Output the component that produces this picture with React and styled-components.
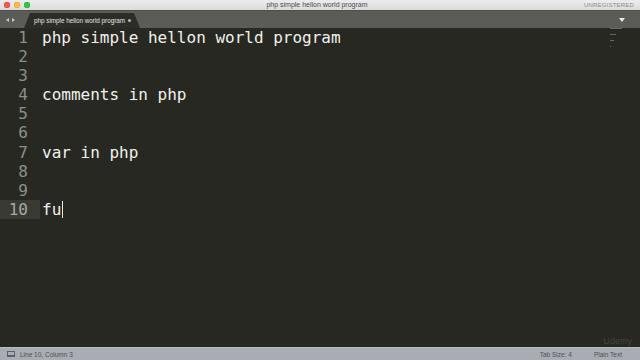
import React from "react";
import styled, { createGlobalStyle } from "styled-components";

const Global = createGlobalStyle`
	html, body {
		margin: 0;
		padding: 0;
		width: 640px;
		height: 360px;
		overflow: hidden;
		background: #272822;
	}
	* { box-sizing: border-box; }
`;

const lines = [
	"php simple hellon world program",
	"",
	"",
	"comments in php",
	"",
	"",
	"var in php",
	"",
	"",
	"fu",
];

const App = () => {
	return (
		<>
			<Global />
			<Window>
				<TitleBar>
					<Lights>
						<Light color="#fc5753" border="#df3e3a" />
						<Light color="#fdbc40" border="#de9f34" />
						<Light color="#33c748" border="#27aa35" />
					</Lights>
					<Title>php simple hellon world program</Title>
					<Unregistered>UNREGISTERED</Unregistered>
				</TitleBar>
				<TabBar>
					<Arrows>
						<Arrow dir="left" />
						<Arrow dir="right" />
					</Arrows>
					<Tab>
						<TabLabel>php simple hellon world program</TabLabel>
						<TabDot />
					</Tab>
					<TabMenu />
				</TabBar>
				<Editor>
					<Gutter>
						{lines.map((_, i) => (
							<LineNo key={i} active={i === lines.length - 1}>
								{i + 1}
							</LineNo>
						))}
					</Gutter>
					<Code>
						{lines.map((l, i) => (
							<CodeLine key={i}>
								{l}
								{i === lines.length - 1 && <Caret />}
							</CodeLine>
						))}
					</Code>
					<Minimap>
						<MiniLine w={12} />
						<MiniLine w={0} />
						<MiniLine w={0} />
						<MiniLine w={6} />
						<MiniLine w={0} />
						<MiniLine w={0} />
						<MiniLine w={4} />
						<MiniLine w={0} />
						<MiniLine w={0} />
						<MiniLine w={1} />
					</Minimap>
					<Watermark>Udemy</Watermark>
				</Editor>
				<StatusBar>
					<StatusLeft>
						<PanelIcon />
						<StatusText>Line 10, Column 3</StatusText>
					</StatusLeft>
					<StatusRight>
						<StatusText>Tab Size: 4</StatusText>
						<StatusText>Plain Text</StatusText>
					</StatusRight>
				</StatusBar>
			</Window>
		</>
	);
};

const Window = styled.div`
	width: 640px;
	height: 360px;
	display: flex;
	flex-direction: column;
	font-family: "Liberation Sans", Arial, sans-serif;
`;

const TitleBar = styled.div`
	height: 10px;
	flex: none;
	background: linear-gradient(#ececec, #dcdcdc);
	display: flex;
	align-items: center;
	padding: 0 6px 0 4px;
`;

const Lights = styled.div`
	display: flex;
	gap: 4px;
`;

const Light = styled.span`
	width: 6px;
	height: 6px;
	border-radius: 50%;
	background: ${(p) => p.color};
	box-shadow: inset 0 0 0 0.5px ${(p) => p.border};
`;

const Title = styled.div`
	flex: 1;
	text-align: center;
	font-size: 7px;
	color: #4a4a4a;
	line-height: 10px;
	padding-left: 20px;
`;

const Unregistered = styled.div`
	font-size: 6px;
	color: #8c8c8c;
	letter-spacing: 0.2px;
	line-height: 10px;
`;

const TabBar = styled.div`
	height: 18px;
	flex: none;
	background: #5b5b57;
	display: flex;
	align-items: flex-end;
	padding-left: 6px;
	border-top: 1px solid #4c4c49;
`;

const Arrows = styled.div`
	width: 18px;
	height: 16px;
	display: flex;
	align-items: center;
	gap: 3px;
`;

const Arrow = styled.span`
	width: 0;
	height: 0;
	border-top: 2.5px solid transparent;
	border-bottom: 2.5px solid transparent;
	${(p) =>
		p.dir === "left"
			? "border-right: 3px solid #c9c9c6;"
			: "border-left: 3px solid #c9c9c6;"}
`;

const Tab = styled.div`
	height: 15px;
	width: 116px;
	background: #2c2d28;
	clip-path: polygon(6px 0, 110px 0, 116px 100%, 0 100%);
	display: flex;
	align-items: center;
	padding: 0 9px 0 10px;
`;

const TabLabel = styled.div`
	flex: 1;
	font-size: 6.3px;
	color: #e4e4e0;
	white-space: nowrap;
`;

const TabDot = styled.span`
	width: 3px;
	height: 3px;
	border-radius: 50%;
	background: #b5b5b0;
`;

const TabMenu = styled.span`
	margin-left: auto;
	margin-right: 15px;
	align-self: center;
	width: 0;
	height: 0;
	border-left: 3px solid transparent;
	border-right: 3px solid transparent;
	border-top: 4px solid #ecece8;
`;

const Editor = styled.div`
	flex: 1;
	background: #272822;
	display: flex;
	position: relative;
	font-family: "DejaVu Sans Mono", monospace;
	font-size: 16px;
`;

const Gutter = styled.div`
	width: 40px;
	flex: none;
	display: flex;
	flex-direction: column;
`;

const LineNo = styled.div`
	height: 19.1px;
	line-height: 19.1px;
	text-align: right;
	padding-right: 12px;
	color: ${(p) => (p.active ? "#a8a9a2" : "#8e8f88")};
	background: ${(p) => (p.active ? "#393a31" : "transparent")};
`;

const Code = styled.div`
	flex: 1;
	padding-left: 2px;
	display: flex;
	flex-direction: column;
`;

const CodeLine = styled.div`
	height: 19.1px;
	line-height: 19.1px;
	color: #f1f1ec;
	white-space: pre;
	display: flex;
	align-items: center;
`;

const Caret = styled.span`
	width: 1px;
	height: 17px;
	background: #e8e8e2;
	margin-left: 1px;
`;

const Minimap = styled.div`
	position: absolute;
	top: 0;
	right: 16px;
	width: 14px;
	display: flex;
	flex-direction: column;
`;

const MiniLine = styled.div`
	height: 1px;
	width: ${(p) => p.w}px;
	margin-bottom: 1px;
	background: #65665f;
`;

const Watermark = styled.div`
	position: absolute;
	right: 8px;
	bottom: 1px;
	font-family: "Liberation Sans", Arial, sans-serif;
	font-size: 9px;
	color: rgba(255, 255, 255, 0.15);
`;

const StatusBar = styled.div`
	height: 13px;
	flex: none;
	background: #a9acb3;
	border-top: 1px solid #b9bcc2;
	display: flex;
	align-items: center;
	justify-content: space-between;
	padding: 0 18px 0 7px;
`;

const StatusLeft = styled.div`
	display: flex;
	align-items: center;
	gap: 5px;
`;

const PanelIcon = styled.span`
	width: 8px;
	height: 6px;
	border: 1px solid #5b5e64;
	border-bottom-width: 2px;
`;

const StatusRight = styled.div`
	display: flex;
	gap: 22px;
`;

const StatusText = styled.span`
	font-size: 6.5px;
	color: #4d5055;
`;

export default App;
